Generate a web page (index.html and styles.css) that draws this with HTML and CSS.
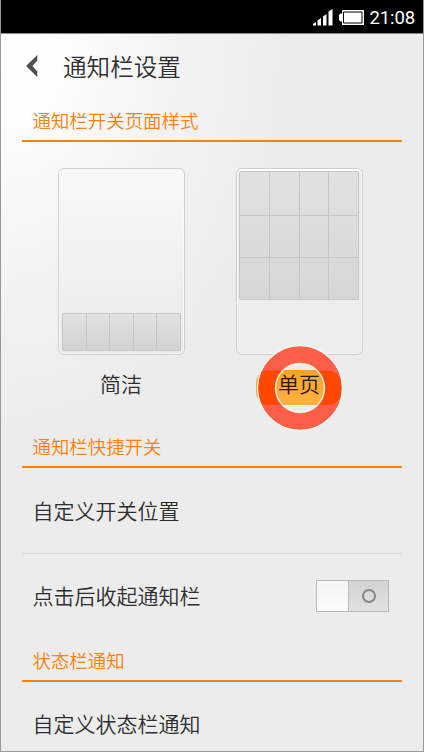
FILE: index.html
```
<!DOCTYPE html>
<html lang="zh-CN">
<head>
<meta charset="utf-8">
<title>通知栏设置</title>
<link rel="stylesheet" href="styles.css">
</head>
<body>
<div class="screen">
  <header class="status">
    <svg class="signal" width="20" height="17" viewBox="0 0 20 17" fill="#fff"><path d="M0 16.500V15l3-2v3.500zM4.500 16.500v-5l3.500-2.500v7.500zM10 16.500V7.500l3.500-2.500v11.500zM15.500 16.500V2.500L19.500 0v16.500z"/></svg>
    <svg class="battery" width="25" height="15" viewBox="0 0 25 15"><path fill="#fff" d="M3 0h22v15H3v-3.500H1.500L0 10V5l1.500-1.500H3z"/><path d="M4.500 2h18.500v11H4.500z" fill="none" stroke="#000" stroke-width="1"/></svg>
    <span class="time">21:08</span>
  </header>
  <main class="content">
    <div class="titlebar">
      <svg class="back" width="12" height="22" viewBox="0 0 12 22"><path d="M11.300 0v5.500L6.500 11l4.800 5.500V22L0 11z" fill="#505050"/></svg>
      <h1>通知栏设置</h1>
    </div>
    <h2 class="section first">通知栏开关页面样式</h2>
    <div class="styles">
      <div class="option">
        <div class="phone simple">
          <div class="cells row"><i></i><i></i><i></i><i></i><i></i></div>
        </div>
        <span class="label">简洁</span>
      </div>
      <div class="option">
        <div class="phone single">
          <div class="cells grid"><i></i><i></i><i></i><i></i><i></i><i></i><i></i><i></i><i></i><i></i><i></i><i></i></div>
        </div>
        <span class="label selected">单页<svg class="ring" width="88" height="88" viewBox="0 0 88 88"><defs><clipPath id="disc"><path clip-rule="evenodd" d="M44 2a42 42 0 1 0 .01 0zM44 19.500a24.500 24.500 0 1 1-.01 0z"/></clipPath></defs><g clip-path="url(#disc)"><path fill="#fb5f48" d="M0 0h88v88H0z"/><rect x="-1" y="26.500" width="86" height="34.500" rx="13" fill="#ff4800"/></g><circle cx="44" cy="44" r="42.500" fill="none" stroke="#fff6f0" stroke-width="1.300"/><circle cx="44" cy="44" r="24.400" fill="none" stroke="#fff0dc" stroke-width="1.500"/></svg></span>
      </div>
    </div>
    <h2 class="section">通知栏快捷开关</h2>
    <div class="item divided">自定义开关位置</div>
    <div class="item toggle-item">点击后收起通知栏<span class="toggle"><b></b><em></em></span></div>
    <h2 class="section last">状态栏通知</h2>
    <div class="item">自定义状态栏通知</div>
  </main>
</div>
</body>
</html>
```
FILE: styles.css
```
*, *::before { box-sizing: border-box; }
body { margin: 0; font-family: "Noto Sans CJK SC", sans-serif; font-weight: 350; color: #2e2e2e; }
.screen {
  width: 424px; height: 752px; overflow: hidden;
  border: solid #999; border-width: 0 1px 1px;
  background: radial-gradient(ellipse 290px 400px at 0 34px, #fff 0, #fdfdfd 20%, #f3f3f3 60%, #ececec 100%);
}
.status {
  height: 34px; padding: 1px 8px 0 0; background: #000;
  border-bottom: 1px solid #888;
  display: flex; justify-content: flex-end; align-items: center;
}
.signal { margin-right: 6px; }
.battery { margin-right: 5px; }
.time { font: 18.5px/20px Roboto, sans-serif; color: #fff; letter-spacing: -.1px; padding-top: 2px; }
.content { padding: 0 21px; }
.titlebar { height: 65px; display: flex; align-items: center; padding-left: 4px; }
.back { margin: 0 25px 2px 0; }
h1 { margin: 0; padding-bottom: 2px; font-size: 23.6px; line-height: 30px; font-weight: 350; }
.section {
  margin: 0; height: 41px; padding: 3px 0 0 10.5px;
  border-bottom: 2px solid #ff8108; color: #ff8108;
  font-size: 18.45px; line-height: 33px; font-weight: 350;
}
.section.first { height: 43px; padding-top: 5px; }
.section.last { height: 43px; padding-top: 5px; }
.styles { height: 285px; padding: 26px 39px 0 36px; display: flex; justify-content: space-between; }
.option { display: flex; flex-direction: column; align-items: center; }
.phone {
  width: 127px; height: 187px; padding: 3px; border: 1px solid #cfcfcf; border-radius: 6px;
  background: linear-gradient(#f8f8f8, #eaeaea); display: flex; flex-direction: column;
  box-shadow: inset 0 0 0 1px #f8f8f8;
}
.simple { justify-content: flex-end; }
.single { background: #ededed; padding: 2px 3px 2px 2px; box-shadow: inset 0 2px 0 #fff, inset 0 0 0 1px #f6f6f6; }
.cells {
  display: grid; border: solid #c6c6c6; border-width: 1px 0 0 1px; border-radius: 2px;
  background: linear-gradient(#e2e2e2, #d2d2d2);
}
.cells i { border: solid #c6c6c6; border-width: 0 1px 1px 0; }
.row { height: 38px; grid-template-columns: repeat(5, 1fr); }
.grid { height: 129px; grid-template-columns: repeat(4, 1fr); grid-template-rows: 44px 42px 42px; background: linear-gradient(#e1e1e1, #d6d6d6); }
.label { margin-top: 11px; margin-right: 1px; font-size: 21px; line-height: 34px; }
.selected {
  position: relative; width: 86px; height: 35px; margin: 15px 1px 0 0; line-height: 26px; text-align: center;
  color: #25160a; background: linear-gradient(#ffa12c, #ffb240); border-radius: 13px;
}
.ring { position: absolute; left: 0; top: -26px; }
.item { height: 86px; padding: 0 10.5px 2px; display: flex; align-items: center; font-size: 21px; }
.item:last-child { padding-bottom: 4px; }
.divided { border-bottom: 1px solid #d4d4d4; }
.toggle-item { height: 85px; justify-content: space-between; padding: 0 13px 3px 10.5px; }
.toggle { width: 73px; height: 32px; margin-top: 2px; border: 1px solid #b8b8b8; display: flex; }
.toggle b { width: 31px; background: linear-gradient(#f4f4f4, #fcfcfc); }
.toggle em {
  flex: 1; display: flex; align-items: center; justify-content: center;
  background: linear-gradient(#d3d3d3, #e2e2e2); border-left: 1px solid #bbb;
}
.toggle em::before { content: ""; width: 14px; height: 14px; border: 2.5px solid #858585; border-radius: 50%; }
```
